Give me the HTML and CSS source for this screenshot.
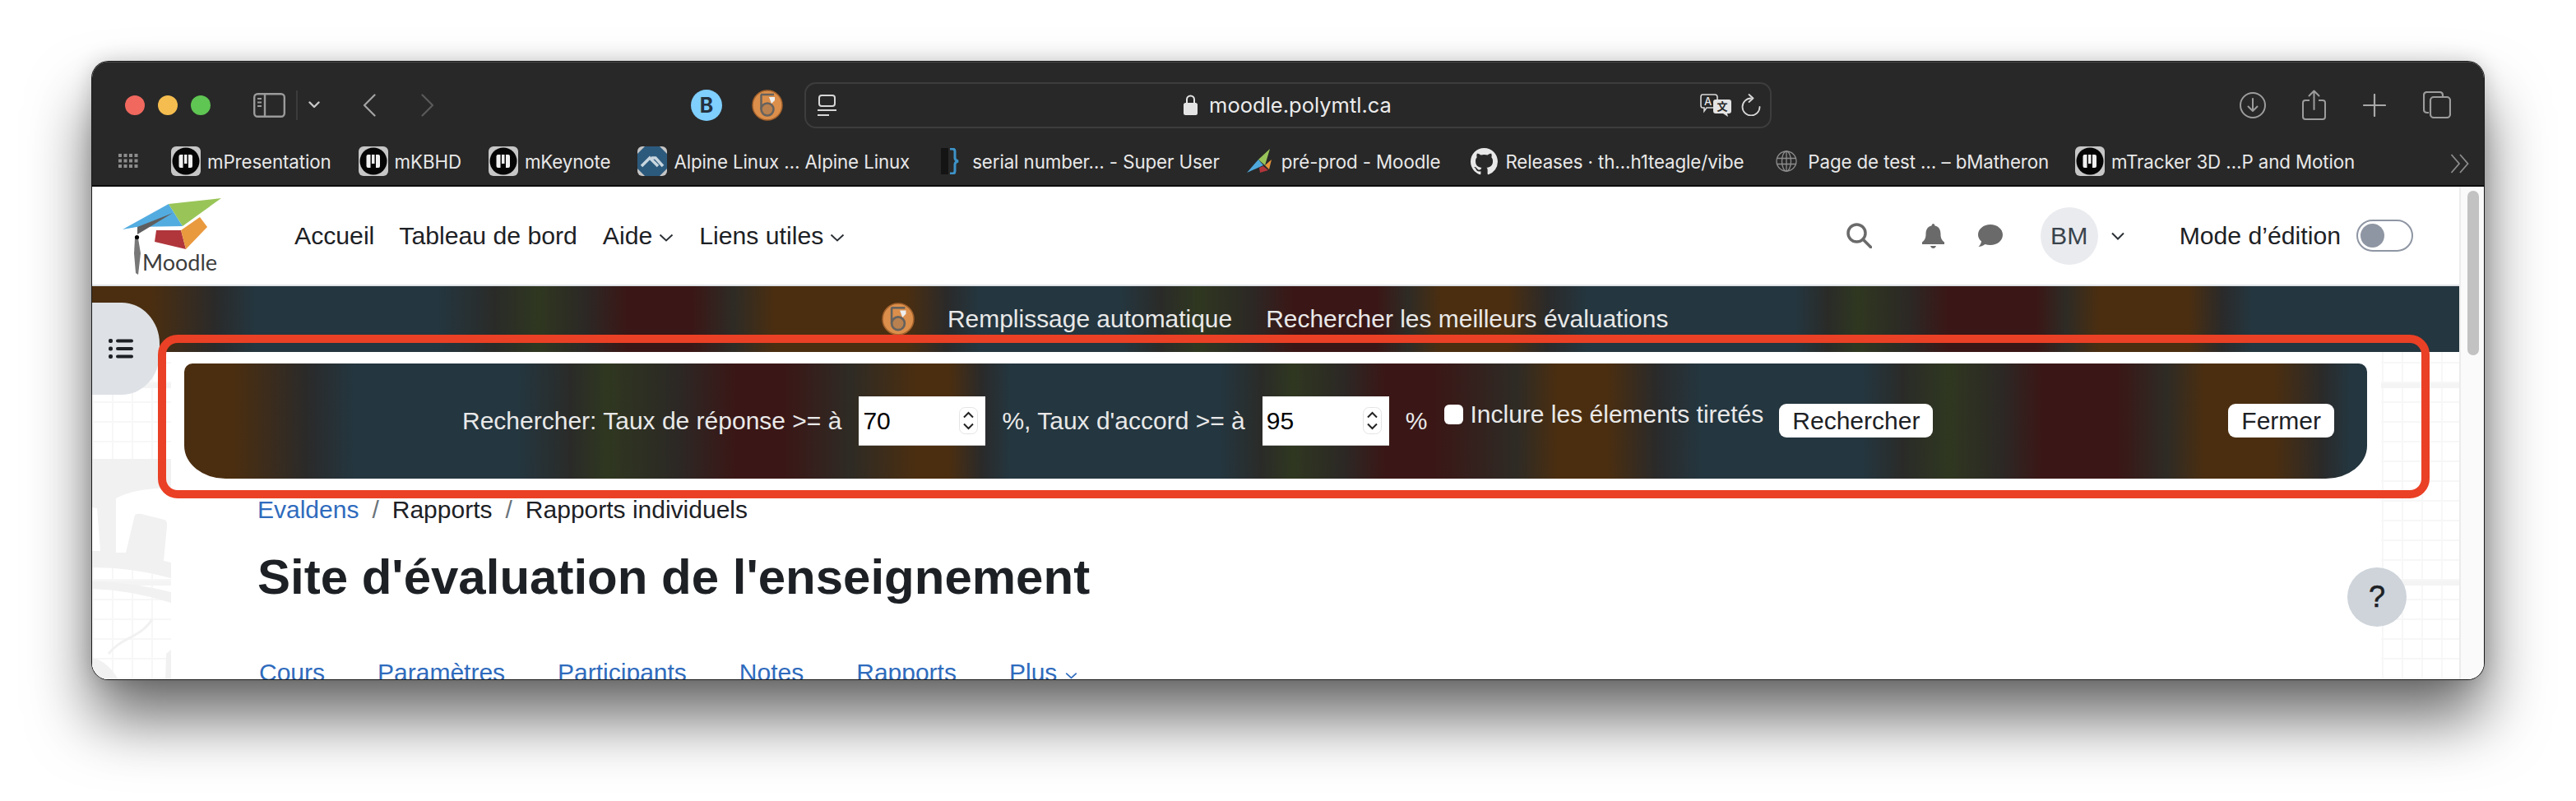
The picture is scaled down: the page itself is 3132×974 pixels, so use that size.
FILE: index.html
```html
<!DOCTYPE html>
<html lang="fr">
<head>
<meta charset="utf-8">
<title>Site d'évaluation de l'enseignement</title>
<link rel="stylesheet" href="styles.css">
</head>
<body>
<svg class="defs" width="0" height="0" aria-hidden="true">
  <symbol id="mark" viewBox="0 0 36 36">
    <rect width="36" height="36" rx="6" fill="#c6c6c6"/>
    <circle cx="18" cy="18" r="16.5" fill="#050505"/>
    <path d="M9.5 12q0-2 2-2h3v16h-3q-2 0-2-2zM16 10h3.5v11H16zM21 10h3q2 0 2 2v12q0 2-2 2h-3z" fill="#f0f0f0"/>
  </symbol>
  <symbol id="coin" viewBox="0 0 38 38">
    <circle cx="19" cy="19" r="18" fill="#dc8f4b" stroke="#a4622c" stroke-width="1.5"/>
    <path d="M11 6h16" stroke="#66625e" stroke-width="2.5"/>
    <path d="M11.5 6v18" stroke="#66625e" stroke-width="2.5"/>
    <circle cx="19" cy="24" r="7.5" fill="#b9814f" stroke="#66625e" stroke-width="2.6"/>
    <path d="M21 9h7v4l-4 4z" fill="#eee"/>
  </symbol>
</svg>

<div class="window">
  <header class="toolbar">
    <div class="tb-row">
      <div class="lights"><span class="light red"></span><span class="light yellow"></span><span class="light green"></span></div>
      <svg class="ico side" viewBox="0 0 39 30" fill="none" stroke="#9a9a9a" stroke-width="2.4"><rect x="1.2" y="1.2" width="36.6" height="27.6" rx="4"/><path d="M14 1v28"/><path d="M5 7h5M5 11.5h5M5 16h5" stroke-width="1.8"/></svg>
      <span class="tb-sep"></span>
      <svg class="ico chev-s" viewBox="0 0 14 9" fill="none" stroke="#c8c8c8" stroke-width="2.4" stroke-linecap="round" stroke-linejoin="round"><path d="M1.5 1.5 7 7l5.5-5.5"/></svg>
      <svg class="ico back" viewBox="0 0 16 28" fill="none" stroke="#a4a4a4" stroke-width="2.2" stroke-linecap="round" stroke-linejoin="round"><path d="M14.5 1.5 2 14l12.5 12.5"/></svg>
      <svg class="ico fwd" viewBox="0 0 16 28" fill="none" stroke="#5a5a5a" stroke-width="2.2" stroke-linecap="round" stroke-linejoin="round"><path d="M1.5 1.5 14 14 1.5 26.5"/></svg>
      <span class="ext-b">B</span>
      <svg class="coin-tb"><use href="#coin"/></svg>
      <div class="url">
        <svg class="ico reader" viewBox="0 0 23 26" fill="none" stroke="#d6d6d6" stroke-width="2"><rect x="2" y="1" width="19" height="13" rx="3"/><path d="M0 19h23M0 25h14"/></svg>
        <div class="addr">
          <svg class="ico lock" viewBox="0 0 17 25"><path d="M4 11V6a4.5 4.5 0 0 1 9 0v5" fill="none" stroke="#e4e4e4" stroke-width="2"/><rect y="10" width="17" height="15" rx="2.5" fill="#e4e4e4"/></svg>
          <span>moodle.polymtl.ca</span>
        </div>
        <svg class="ico trans" viewBox="0 0 38 28"><path d="M3 1h15q3 0 3 3v10q0 3-3 3H8l-3 4v-4H3 Q1 17 1 14V4q0-3 2-3z" fill="none" stroke="#d8d8d8" stroke-width="1.6"/><text x="5" y="13.5" class="ti-a">A</text><path d="M19 7h16q3 0 3 3v11q0 3-3 3h-2l1 4-6-4h-9q-3 0-3-3V10q0-3 3-3z" fill="#e4e4e4"/><text x="20.5" y="20" class="ti-b">文</text></svg>
        <svg class="ico reload" viewBox="0 0 24 27" fill="none" stroke="#d8d8d8" stroke-width="1.8" stroke-linecap="round" stroke-linejoin="round"><path d="M12 5.5A10.5 10.5 0 1 0 22.5 16"/><path d="M9.5 1l5 4.5-5 4.5"/></svg>
      </div>
      <div class="tb-right">
        <svg class="ico dl" viewBox="0 0 32 32" fill="none" stroke="#9c9c9c" stroke-width="2"><circle cx="16" cy="16" r="15"/><path d="M16 8v15M10.5 17.5 16 23l5.5-5.5" stroke-linecap="round" stroke-linejoin="round"/></svg>
        <svg class="ico share" viewBox="0 0 29 37" fill="none" stroke="#9c9c9c" stroke-width="2"><path d="M9 13H4q-3 0-3 3v17q0 3 3 3h21q3 0 3-3V16q0-3-3-3h-5"/><path d="M14.5 24V2M8.5 7.5l6-6 6 6" stroke-linecap="round" stroke-linejoin="round"/></svg>
        <svg class="ico plus" viewBox="0 0 28 28" stroke="#a8a8a8" stroke-width="2.2" stroke-linecap="round"><path d="M14 1v26M1 14h26"/></svg>
        <svg class="ico tabs" viewBox="0 0 34 33" fill="none" stroke="#9c9c9c" stroke-width="2.2"><path d="M7 26H5q-4 0-4-4V5q0-4 4-4h15q4 0 4 4v2"/><rect x="9" y="7" width="24" height="25" rx="4"/></svg>
      </div>
    </div>
    <nav class="tb-row2">
      <svg class="ico grid9" viewBox="0 0 24 18" fill="#8d8d8d"><path d="M0 0h4v4H0zM6.5 0h4v4h-4zM13 0h4v4h-4zM19.5 0h4v4h-4zM0 6.5h4v4H0zM6.5 6.5h4v4h-4zM13 6.5h4v4h-4zM19.5 6.5h4v4h-4zM0 13h4v4H0zM6.5 13h4v4h-4zM13 13h4v4h-4zM19.5 13h4v4h-4z"/></svg>
      <a class="bm b1"><svg class="fav"><use href="#mark"/></svg>mPresentation</a>
      <a class="bm b2"><svg class="fav"><use href="#mark"/></svg>mKBHD</a>
      <a class="bm b3"><svg class="fav"><use href="#mark"/></svg>mKeynote</a>
      <a class="bm b4"><svg class="fav" viewBox="0 0 36 36"><rect width="36" height="36" rx="6" fill="#c6c6c6"/><path d="M9 0h18l9 9v18l-9 9H9l-9-9V9z" fill="#2c5a7d"/><path d="M5 24l10-10 10 10M17 14h5l9 10" fill="none" stroke="#c9d6df" stroke-width="3.5"/></svg>Alpine Linux … Alpine Linux</a>
      <a class="bm b5"><svg class="fav-brace" viewBox="0 0 26 32" fill="none"><path d="M0 0h9v32H0z" fill="#141414"/><path d="M11 1h3q3 0 3 3v8q0 3 4 4-4 1-4 4v8q0 3-3 3h-3" stroke="#3d93c8" stroke-width="3"/></svg>serial number… - Super User</a>
      <a class="bm b6"><svg class="fav-cap" viewBox="0 0 31 30"><path d="M28 0 14 13l8 7z" fill="#98c35a"/><path d="M0 29 14 13l6 7z" fill="#4fa8dc"/><path d="M30 13l-3 12-5-5z" fill="#e7953c"/><path d="M20 21l6 5-10 3-1-6z" fill="#b1363b"/></svg>pré-prod - Moodle</a>
      <a class="bm b7"><svg class="fav-gh" viewBox="0 0 16 16"><path fill="#e8e8e8" d="M8 0C3.58 0 0 3.58 0 8c0 3.54 2.29 6.53 5.47 7.59.4.07.55-.17.55-.38 0-.19-.01-.82-.01-1.49-2.01.37-2.53-.49-2.69-.94-.09-.23-.48-.94-.82-1.13-.28-.15-.68-.52-.01-.53.63-.01 1.08.58 1.23.82.72 1.21 1.87.87 2.33.66.07-.52.28-.87.51-1.07-1.78-.2-3.64-.89-3.64-3.95 0-.87.31-1.59.82-2.15-.08-.2-.36-1.02.08-2.12 0 0 .67-.21 2.2.82.64-.18 1.32-.27 2-.27s1.36.09 2 .27c1.53-1.04 2.2-.82 2.2-.82.44 1.1.16 1.92.08 2.12.51.56.82 1.27.82 2.15 0 3.07-1.87 3.75-3.65 3.95.29.25.54.73.54 1.48 0 1.07-.01 1.93-.01 2.2 0 .21.15.46.55.38A8.01 8.01 0 0 0 16 8c0-4.42-3.58-8-8-8z"/></svg>Releases · th…h1teagle/vibe</a>
      <a class="bm b8"><svg class="fav-globe" viewBox="0 0 26 26" fill="none" stroke="#8d8d8d" stroke-width="1.3"><circle cx="13" cy="13" r="12"/><ellipse cx="13" cy="13" rx="5.5" ry="12"/><path d="M13 1v24M1.5 9.5h23M1.5 16.5h23"/></svg>Page de test … – bMatheron</a>
      <a class="bm b9"><svg class="fav"><use href="#mark"/></svg>mTracker 3D …P and Motion</a>
      <svg class="ico more" viewBox="0 0 24 24" fill="none" stroke="#8c8c8c" stroke-width="1.8"><path d="M1.5 1 11 12 1.5 23M12 1l9.5 11L12 23"/></svg>
    </nav>
  </header>

  <div class="viewport">
    <main class="page">
      <div class="navbar">
        <svg class="logo" viewBox="0 0 122 94">
          <path d="M1 39 57 8l17 27-56 1z" fill="#53ace0"/>
          <path d="M57 8l64-7-47 34z" fill="#99c558"/>
          <path d="M42 40h30l6 23-38-9z" fill="#b0363c"/>
          <path d="M95 24l9 12-26 27-6-23z" fill="#e9993e"/>
          <path d="M19 36 62 19 19 45z" fill="#5e5e5e"/>
          <path d="M16 50h4l3 18-3 26-3-2-2-24z" fill="#777"/>
          <circle cx="18.5" cy="48.5" r="2.6" fill="#000"/>
          <text x="25" y="89" class="logo-text">Moodle</text>
        </svg>
        <a class="nav-link n1">Accueil</a>
        <a class="nav-link n2">Tableau de bord</a>
        <a class="nav-link n3">Aide<svg class="chev" viewBox="0 0 18 10" fill="none" stroke="#2b3035" stroke-width="2"><path d="M1.5 1.5 9 8.5l7.5-7"/></svg></a>
        <a class="nav-link n4">Liens utiles<svg class="chev" viewBox="0 0 18 10" fill="none" stroke="#2b3035" stroke-width="2"><path d="M1.5 1.5 9 8.5l7.5-7"/></svg></a>
        <div class="nav-right">
          <svg class="ico search" viewBox="0 0 31 31" fill="none" stroke="#6a6a6a" stroke-width="3.5"><circle cx="12.5" cy="12.5" r="10.5"/><path d="M20 20l9.5 9.5" stroke-linecap="round"/></svg>
          <svg class="ico bell" viewBox="0 0 27 30" fill="#6a6a6a"><path d="M13.5 0q2 0 2 2.5c5 1 7 5 7 10 0 5 1 7 4.5 10v2.5H0V22.5c3.5-3 4.5-5 4.5-10 0-5 2-9 7-10Q11.5 0 13.5 0zM10 27h7q-1 3-3.5 3T10 27z"/></svg>
          <svg class="ico chat" viewBox="0 0 30 27" fill="#6a6a6a"><path d="M15 0c8.3 0 15 5.5 15 12.5S23.3 25 15 25q-3.5 0-6.5-1C6 26 3 27 .5 27 2.5 25 4 22.5 4 20.5 1.5 18.3 0 15.5 0 12.5 0 5.500 6.7 0 15 0z"/></svg>
          <span class="avatar">BM</span>
          <svg class="ico chev-u" viewBox="0 0 16 10" fill="none" stroke="#2b3035" stroke-width="2"><path d="M1 1.5 8 8.5l7-7"/></svg>
          <span class="edit-label">Mode d’édition</span>
          <span class="toggle"><span class="knob"></span></span>
        </div>
      </div>

      <div class="banner">
        <svg class="coin-bn"><use href="#coin"/></svg>
        <a class="b-link">Remplissage automatique</a>
        <a class="b-link b-link2">Rechercher les meilleurs évaluations</a>
      </div>

      <div class="body-area">
        <div class="content">
          <form class="panel">
            <label class="p-text">Rechercher: Taux de réponse &gt;= à</label>
            <span class="num"><input class="num-in" type="text" value="70"><svg class="spin" viewBox="0 0 23 33"><rect x=".5" y=".5" width="22" height="32" rx="7" fill="#fff" stroke="#e4e4e4"/><path d="M6 12.5l5.5-5.5 5.5 5.5M6 20.5l5.5 5.5 5.5-5.5" fill="none" stroke="#222" stroke-width="2"/></svg></span>
            <label class="p-text">%, Taux d'accord &gt;= à</label>
            <span class="num"><input class="num-in" type="text" value="95"><svg class="spin" viewBox="0 0 23 33"><rect x=".5" y=".5" width="22" height="32" rx="7" fill="#fff" stroke="#e4e4e4"/><path d="M6 12.5l5.5-5.5 5.5 5.5M6 20.5l5.5 5.5 5.5-5.5" fill="none" stroke="#222" stroke-width="2"/></svg></span>
            <label class="p-text">%</label>
            <label class="p-check"><input class="cb" type="checkbox"><span>Inclure les élements tiretés</span></label>
            <button class="btn" type="button">Rechercher</button>
            <button class="btn btn-close" type="button">Fermer</button>
          </form>
          <div class="crumbs">
            <a class="crumb-link">Evaldens</a><span class="crumb-sep">/</span><span>Rapports</span><span class="crumb-sep">/</span><span>Rapports individuels</span>
          </div>
          <h1 class="title">Site d'évaluation de l'enseignement</h1>
          <div class="tabs-row">
            <a class="tab">Cours</a><a class="tab">Paramètres</a><a class="tab">Participants</a><a class="tab">Notes</a><a class="tab">Rapports</a><a class="tab">Plus<svg class="chev-b" viewBox="0 0 18 10" fill="none" stroke="#2f6bbd" stroke-width="2"><path d="M1.5 1.5 9 8.5l7.5-7"/></svg></a>
          </div>
        </div>
        <svg class="deco" viewBox="0 0 96 398">
          <g transform="translate(0 42)">
            <path d="M0 88H96V233Q50 220 0 220z" fill="#f1f1f1"/>
            <path d="M29 202V136Q50 124 96 123V214L87 212 91 170Q92 164 88 162L60 155Q55 154 52 156L41 202z" fill="#fff"/>
            <path d="M0 147 6 148 10 200 0 200z" fill="#fff"/>
            <path d="M0 237Q50 238 96 250V263Q50 248 0 246z" fill="#f1f1f1"/>
            <path d="M73 283C60 305 35 305 20 325" fill="none" stroke="#f1f1f1" stroke-width="3"/>
            <path d="M0 330Q30 335 50 398H0z" fill="#f1f1f1"/>
            <path d="M90 325 96 320V398H88z" fill="#f1f1f1"/>
          </g>
        </svg>
        <span class="help">?</span>
        <span class="side-toggle"><svg class="list-ico" viewBox="0 0 30 24" fill="#1d2125"><rect y="0" width="5" height="5" rx="2"/><rect y="9.5" width="5" height="5" rx="2"/><rect y="19" width="5" height="5" rx="2"/><rect x="9" y=".5" width="21" height="4" rx="2"/><rect x="9" y="10" width="21" height="4" rx="2"/><rect x="9" y="19.5" width="21" height="4" rx="2"/></svg></span>
      </div>
    </main>
    <aside class="scrollbar"><span class="thumb"></span></aside>
    <span class="annotation"></span>
  </div>
</div>
</body>
</html>
```
FILE: styles.css
```css
* { box-sizing: border-box; }
html, body { margin: 0; height: 100%; }
body {
  background: #fff;
  padding: 75px 112px 0;
  overflow: hidden;
  font-family: "Liberation Sans", Arial, sans-serif;
  color: #1d2125;
}
body::before {
  content: "";
  position: absolute;
  left: 112px;
  top: 75px;
  width: 2908px;
  height: 751px;
  border-radius: 20px;
  box-shadow: 0 48px 76px rgba(0, 0, 0, .58), 0 0 26px rgba(0, 0, 0, .18);
}
.defs { position: absolute; }
.ico { display: block; flex: none; }

.window {
  position: relative;
  width: 2908px;
  height: 751px;
  border-radius: 20px;
  overflow: hidden;
  display: flex;
  flex-direction: column;
  background: #fff;
  box-shadow: 0 0 0 1px #1a1a1a;
}

/* browser chrome */
.toolbar {
  height: 152px;
  flex: none;
  background: #282828;
  border-top: 1px solid #4a4a4a;
  border-bottom: 2px solid #0c0c0c;
  color: #e8e8e8;
  font-family: Inter, "Liberation Sans", sans-serif;
}
.tb-row {
  height: 92px;
  display: flex;
  align-items: center;
  padding: 11px 0 0 40px;
}
.lights { display: flex; gap: 16px; }
.light { width: 24px; height: 24px; border-radius: 50%; }
.red { background: #f0685e; }
.yellow { background: #f5bd4f; }
.green { background: #5fc553; }
.side { width: 39px; height: 30px; margin-left: 52px; }
.tb-sep { width: 2px; height: 36px; background: #3c3c3c; margin-left: 13px; }
.chev-s { width: 14px; height: 9px; margin-left: 13px; }
.back { width: 16px; height: 28px; margin-left: 52px; }
.fwd { width: 16px; height: 28px; margin-left: 55px; }
.ext-b {
  width: 38px; height: 38px; border-radius: 50%;
  background: #7fcfff; color: #24323f;
  font: 700 25px/38px Inter, sans-serif;
  text-align: center; margin-left: 312px;
}
.coin-tb { width: 38px; height: 38px; margin-left: 36px; flex: none; }
.url {
  width: 1176px; height: 56px; margin-left: 26px;
  border: 2px solid #3d3d3d; border-radius: 14px;
  display: flex; align-items: center; padding: 0 11px 0 14px;
}
.reader { width: 23px; height: 26px; }
.addr {
  flex: 1; display: flex; align-items: center; justify-content: center; gap: 14px;
  font-size: 25.5px; font-weight: 400; color: #ececec;
  margin-left: 47px;
}
.lock { width: 17px; height: 25px; }
.trans { width: 38px; height: 28px; }
.ti-a { font: 500 13px Inter, sans-serif; fill: #e4e4e4; }
.ti-b { font: 700 13px "Noto Sans CJK SC", sans-serif; fill: #282828; }
.reload { width: 24px; height: 27px; margin-left: 12px; }
.tb-right { display: flex; align-items: center; }
.dl { width: 32px; height: 32px; margin-left: 569px; }
.share { width: 29px; height: 37px; margin-left: 44px; }
.plus { width: 28px; height: 28px; margin-left: 45px; }
.tabs { width: 34px; height: 33px; margin-left: 45px; }

.tb-row2 {
  height: 56px;
  display: flex;
  align-items: center;
  position: relative;
  padding-left: 32px;
  font-size: 22.3px;
  letter-spacing: -.1px;
}
.grid9 { width: 24px; height: 18px; }
.bm {
  display: flex; align-items: center; gap: 8px; white-space: nowrap; color: #e8e8e8;
  height: 36px;
}
.fav { width: 36px; height: 36px; flex: none; }
.fav-brace { width: 26px; height: 32px; flex: none; }
.fav-cap { width: 31px; height: 30px; flex: none; }
.fav-gh { width: 33px; height: 33px; flex: none; }
.fav-globe { width: 26px; height: 26px; flex: none; }
.b1 { margin-left: 40px; }
.b2, .b3, .b4 { margin-left: 33px; }
.b5 { margin-left: 38px; gap: 12px; }
.b6 { margin-left: 33px; gap: 11px; }
.b7 { margin-left: 37px; gap: 9px; }
.b8 { margin-left: 39px; gap: 13px; }
.b9 { margin-left: 32px; }
.more { width: 24px; height: 24px; position: absolute; right: 17px; top: 19px; }

/* page */
.viewport { flex: 1; display: flex; min-height: 0; position: relative; }
.page { flex: 1; min-width: 0; display: flex; flex-direction: column; }
.navbar {
  height: 121px; flex: none;
  border-bottom: 2px solid #dee2e6;
  display: flex; align-items: center;
  font-size: 30.2px;
  padding-left: 36px;
  background: #fff;
}
.logo { width: 122px; height: 94px; flex: none; }
.logo-text { font: 400 27px Lato, sans-serif; fill: #3d3d3d; }
.nav-link { display: flex; align-items: center; white-space: nowrap; color: #1d2125; }
.n1 { margin-left: 88px; }
.n2 { margin-left: 30px; }
.n3 { margin-left: 31px; }
.n4 { margin-left: 31px; }
.chev { width: 18px; height: 10px; margin-left: 8px; margin-top: 4px; }
.nav-right { margin-left: auto; display: flex; align-items: center; padding-right: 56px; }
.search { width: 31px; height: 31px; }
.bell { width: 27px; height: 30px; margin-left: 61px; }
.chat { width: 30px; height: 27px; margin-left: 41px; }
.avatar {
  width: 70px; height: 70px; border-radius: 50%; background: #eaebef;
  margin-left: 46px; text-align: center; line-height: 70px; color: #39434c;
}
.chev-u { width: 16px; height: 10px; margin-left: 16px; }
.edit-label { margin-left: 67px; white-space: nowrap; }
.toggle {
  width: 69px; height: 39px; border-radius: 20px; border: 2px solid #8f96a3;
  margin-left: 19px; padding: 3px; background: #fff; display: block;
}
.knob { display: block; width: 29px; height: 29px; border-radius: 50%; background: #8f96a3; }

.banner {
  height: 80px; flex: none;
  display: flex; align-items: flex-start;
  padding: 20px 0 0 960px;
  font-size: 29.95px; color: #e9e9e9;
  background: linear-gradient(90deg,
    #4b2e10 0, #4b2e10 71px, #2a2a2a 150px, #24363f 198px, #24363f 421px, #2a2b28 490px,
    #2f3720 543px, #2c2825 600px, #3a1716 650px, #3a1716 730px, #2e2b25 780px, #4b2e10 830px, #4b2e10 990px,
    #2a2a2a 1040px, #24363f 1078px, #24363f 1250px, #2a2b28 1300px, #2f3720 1345px, #2c2825 1410px, #3a1716 1460px, #3a1716 1562px,
    #2e2b25 1600px, #4b2e10 1640px, #4b2e10 1721px, #2a2a2a 1770px, #24363f 1817px, #24363f 2071px, #2a2b28 2110px, #2f3720 2147px,
    #2c2825 2210px, #3a1716 2256px, #3a1716 2364px, #2e2b25 2400px, #4b2e10 2440px, #4b2e10 2549px, #2a2a2a 2590px, #24363f 2626px, #24363f 2878px);
}
.coin-bn { width: 40px; height: 40px; flex: none; }
.b-link { margin-left: 40px; line-height: 40px; white-space: nowrap; }
.b-link2 { margin-left: 41px; }

.body-area {
  flex: 1; min-height: 0; position: relative;
  background-color: #fff;
  background-image:
    linear-gradient(#f4f4f4, #f4f4f4),
    linear-gradient(#f4f4f4, #f4f4f4),
    repeating-linear-gradient(90deg, #f7f7f7 0 2px, transparent 2px 24px),
    repeating-linear-gradient(0deg, #f7f7f7 0 2px, transparent 2px 24px);
  background-size: 100% 6px, 100% 6px, auto, auto;
  background-position: 0 38px, 0 278px, 0 0, 0 0;
  background-repeat: no-repeat, no-repeat, repeat, repeat;
}
.deco { position: absolute; left: 0; top: 0; width: 96px; height: 398px; }
.content {
  margin: 0 95px 0 96px;
  height: 100%;
  background: #fff;
  padding: 14px 17px 0 16px;
  position: relative;
  z-index: 1;
  overflow: hidden;
}
.panel {
  height: 140px;
  border-radius: 10px 10px 50px 50px / 10px 10px 40px 40px;
  display: flex; align-items: center;
  padding: 0 40px 0 338px;
  font-size: 30px; color: #e9e9e9;
  background: linear-gradient(90deg,
    #4b2e10 0, #4b2e10 60px, #2a2a2a 150px, #24363f 206px, #24363f 406px, #2a2b28 470px,
    #2f3720 514px, #2c2825 600px, #3a1716 670px, #3a1716 730px, #2e2b25 810px, #4b2e10 890px, #4b2e10 930px,
    #2a2a2a 970px, #24363f 1004px, #24363f 1259px, #2a2b28 1310px, #2f3720 1348px, #2c2825 1410px, #3a1716 1460px, #3a1716 1520px,
    #2e2b25 1620px, #4b2e10 1670px, #4b2e10 1730px, #2a2a2a 1790px, #24363f 1845px, #24363f 2041px, #2a2b28 2090px, #2f3720 2146px,
    #2c2825 2210px, #3a1716 2258px, #3a1716 2350px, #2e2b25 2410px, #4b2e10 2456px, #4b2e10 2541px, #2a2a2a 2600px, #24363f 2633px);
}
.p-text { white-space: nowrap; margin-right: 21px; }
.num {
  width: 154px; height: 60px; background: #fff; flex: none;
  display: flex; align-items: center; margin-right: 20px;
  border-bottom: 1px solid #ccc;
}
.num-in {
  flex: 1; min-width: 0; border: 0; outline: 0; background: transparent; padding: 0 0 0 5px;
  font: 400 30px "Liberation Sans", sans-serif; color: #000;
}
.spin { width: 23px; height: 33px; margin-right: 9px; flex: none; }
.p-check { display: flex; align-items: flex-start; gap: 8px; white-space: nowrap; margin-top: -16px; }
.cb {
  appearance: none; -webkit-appearance: none; margin: 5px 0 0; width: 23px; height: 24px; border-radius: 6px;
  background: #fff; border: 0; flex: none;
}
.btn {
  height: 41px; border: 0; border-radius: 9px; background: #fff; padding: 0 16px;
  font: 400 30px/41px "Liberation Sans", sans-serif; color: #1d2125; margin-left: 19px;
  margin-top: -1px;
}
.btn-close { margin-left: auto; }

.crumbs {
  display: flex; align-items: center; font-size: 30px; line-height: 38px;
  padding-left: 89px; margin-top: 19px; white-space: nowrap;
}
.crumb-link, .tab { color: #2f6bbd; }
.crumb-sep { color: #6a737b; margin: 0 16px; }
.title {
  margin: 27px 0 0 89px; font-size: 60px; line-height: 72px; font-weight: 700; white-space: nowrap;
}
.tabs-row { display: flex; padding-left: 91px; margin-top: 62px; font-size: 30px; line-height: 36px; gap: 64px; }
.tab { display: flex; align-items: center; white-space: nowrap; }
.chev-b { width: 15px; height: 9px; margin-left: 10px; margin-top: 6px; }

.side-toggle {
  position: absolute; left: 0; top: -60px; width: 82px; height: 112px; z-index: 2;
  background: #dee2e6; border-radius: 0 46px 46px 0 / 0 50px 50px 0;
  display: flex; align-items: center; justify-content: center; padding-right: 12px;
}
.list-ico { width: 30px; height: 24px; }
.help {
  position: absolute; left: 2742px; top: 262px; width: 72px; height: 72px; border-radius: 50%;
  background: #ced4da; text-align: center; font: 400 36px/72px "Liberation Sans", sans-serif; z-index: 2; color: #1d2125;
  -webkit-text-stroke: .6px #1d2125;
}

.scrollbar {
  width: 30px; flex: none; background: #fafafa; border-left: 2px solid #ececec; padding: 5px 6px 0 8px;
}
.thumb { display: block; height: 200px; background: #c2c2c2; border-radius: 8px; }
.annotation {
  position: absolute; left: 80px; top: 180px; width: 2762px; height: 199px;
  border: 10px solid #ea4025; border-radius: 24px; z-index: 5;
}
```
